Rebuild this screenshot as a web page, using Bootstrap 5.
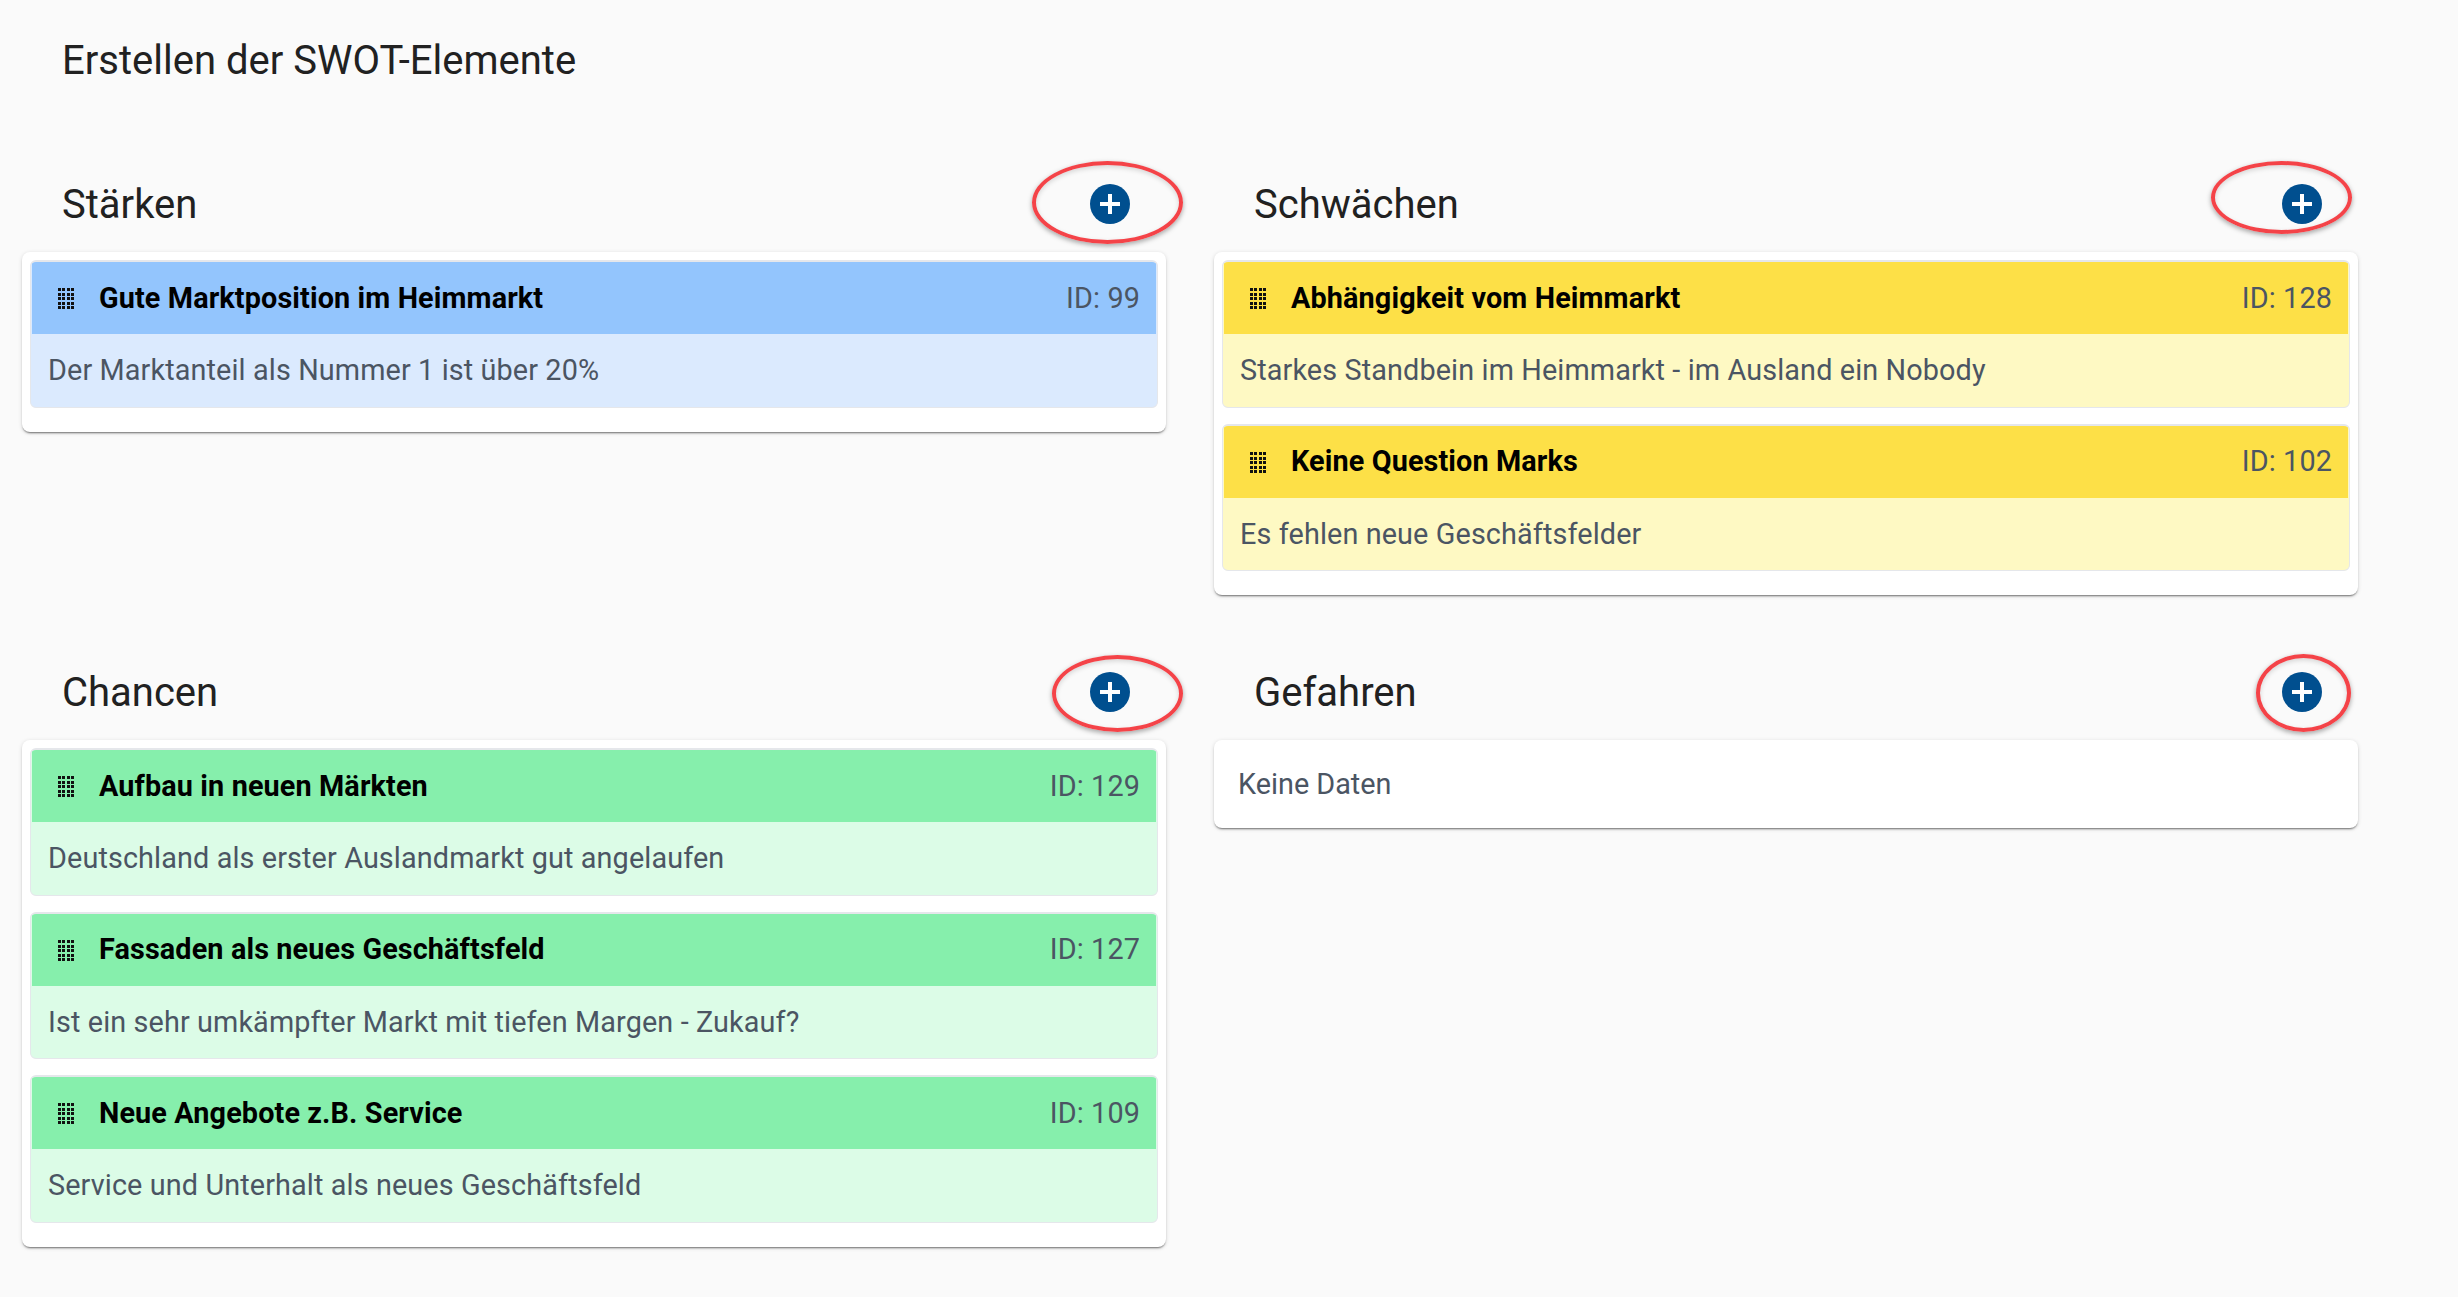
<!DOCTYPE html>
<html lang="de">
<head>
  <meta charset="UTF-8">
  <title>SWOT-Elemente</title>
  <link href="https://cdn.jsdelivr.net/npm/bootstrap@5.3.3/dist/css/bootstrap.min.css" rel="stylesheet">
  <style>
    body {
      background: #fafafa;
      font-family: Roboto, "Liberation Sans", sans-serif;
      color: #212121;
    }

    .swot-page {
      width: 2336px;
      margin-left: 22px;
      padding: 37px 0 40px;
    }

    .swot-title {
      font-size: 40px;
      font-weight: 400;
      line-height: 48px;
      margin: 0 0 35px 40px;
    }

    .swot-grid {
      display: grid;
      grid-template-columns: 1144px 1144px;
      column-gap: 48px;
      row-gap: 49px;
      align-items: start;
      padding-top: 36px;
    }

    .swot-head {
      height: 96px;
      padding: 0 36px 0 40px;
      position: relative;
    }

    .swot-head h2 {
      font-size: 40px;
      font-weight: 400;
      margin: 0;
      padding-top: 2px;
    }

    .add-btn {
      width: 40px;
      height: 40px;
      padding: 0;
      border: 0;
      border-radius: 50%;
      background: #004f8f;
    }

    .add-btn svg {
      display: block;
      margin: auto;
    }

    .red-ring {
      position: absolute;
      border: 4px solid #f44348;
      border-radius: 50%;
      box-shadow: 0 2px 5px rgba(0, 0, 0, .35), inset 0 2px 5px rgba(0, 0, 0, .15);
      pointer-events: none;
    }

    .ring-a { left: 1010px; top: 5px; width: 151px; height: 83px; }
    .ring-b { left: 997px; top: 5px; width: 141px; height: 73px; }
    .ring-c { left: 1030px; top: 11px; width: 131px; height: 77px; }
    .ring-d { left: 1042px; top: 10px; width: 95px; height: 78px; }

    .swot-panel {
      background: #fff;
      border: 0;
      border-radius: 8px;
      padding: 8px;
      box-shadow: 0 2px 2px -1px rgba(0, 0, 0, .5), 0 1px 4px rgba(0, 0, 0, .15);
    }

    .swot-panel.is-empty {
      padding: 24px;
      height: 88px;
      font-size: 28.8px;
      line-height: 41px;
      color: #4b5563;
    }

    .swot-item {
      border: 1px solid #e5e7eb;
      border-top-width: 2px;
      border-radius: 6px;
      overflow: hidden;
      margin-bottom: 16px;
      letter-spacing: .12px;
    }

    .swot-item .card-header {
      height: 72px;
      margin: 0 1px;
      padding: 1px 16px 0 26px;
      border: 0;
      border-radius: 0;
      font-size: 28.8px;
    }

    .item-name {
      font-weight: 700;
      color: #000;
      margin-left: 25px;
    }

    .item-id {
      color: #4b5563;
    }

    .swot-item .card-body {
      flex: none;
      height: 72.5px;
      padding: 0 17px;
      font-size: 28.8px;
      line-height: 73px;
      color: #4b5563;
    }

    .drag-dots {
      display: block;
      flex: none;
    }

    .tone-blue { background: #dbeafe; }
    .tone-blue .card-header { background: #93c5fd; }
    .tone-yellow { background: #fef9c3; }
    .tone-yellow .card-header { background: #fde047; }
    .tone-green { background: #dcfce7; }
    .tone-green .card-header { background: #86efac; }
  </style>
</head>
<body>

<svg width="0" height="0" class="d-block">
  <defs>
    <symbol id="dots" viewBox="0 0 16 21">
      <g fill="#111">
        <rect x="0" y="0" width="3" height="3"/><rect x="4" y="0" width="3" height="3"/><rect x="9" y="0" width="3" height="3"/><rect x="13" y="0" width="3" height="3"/>
        <rect x="0" y="5" width="3" height="3"/><rect x="4" y="5" width="3" height="3"/><rect x="9" y="5" width="3" height="3"/><rect x="13" y="5" width="3" height="3"/>
        <rect x="0" y="9" width="3" height="3"/><rect x="4" y="9" width="3" height="3"/><rect x="9" y="9" width="3" height="3"/><rect x="13" y="9" width="3" height="3"/>
        <rect x="0" y="14" width="3" height="3"/><rect x="4" y="14" width="3" height="3"/><rect x="9" y="14" width="3" height="3"/><rect x="13" y="14" width="3" height="3"/>
        <rect x="0" y="18" width="3" height="3"/><rect x="4" y="18" width="3" height="3"/><rect x="9" y="18" width="3" height="3"/><rect x="13" y="18" width="3" height="3"/>
      </g>
    </symbol>
    <symbol id="plus" viewBox="0 0 40 40">
      <path d="M18 10h4v8h8v4h-8v8h-4v-8h-8v-4h8z" fill="#fff"/>
    </symbol>
  </defs>
</svg>

<div class="swot-page">
  <h1 class="swot-title">Erstellen der SWOT-Elemente</h1>

  <div class="swot-grid">

    <!-- Staerken -->
    <section>
      <div class="swot-head d-flex justify-content-between align-items-center">
        <h2>Stärken</h2>
        <button type="button" class="add-btn"><svg width="40" height="40"><use href="#plus"/></svg></button>
        <span class="red-ring ring-a"></span>
      </div>
      <div class="card swot-panel">
        <div class="card swot-item tone-blue">
          <div class="card-header d-flex align-items-center">
            <svg class="drag-dots" width="16" height="21"><use href="#dots"/></svg>
            <span class="item-name">Gute Marktposition im Heimmarkt</span>
            <span class="item-id ms-auto">ID: 99</span>
          </div>
          <div class="card-body">Der Marktanteil als Nummer 1 ist über 20%</div>
        </div>
      </div>
    </section>

    <!-- Schwaechen -->
    <section>
      <div class="swot-head d-flex justify-content-between align-items-center">
        <h2>Schwächen</h2>
        <button type="button" class="add-btn"><svg width="40" height="40"><use href="#plus"/></svg></button>
        <span class="red-ring ring-b"></span>
      </div>
      <div class="card swot-panel">
        <div class="card swot-item tone-yellow">
          <div class="card-header d-flex align-items-center">
            <svg class="drag-dots" width="16" height="21"><use href="#dots"/></svg>
            <span class="item-name">Abhängigkeit vom Heimmarkt</span>
            <span class="item-id ms-auto">ID: 128</span>
          </div>
          <div class="card-body">Starkes Standbein im Heimmarkt - im Ausland ein Nobody</div>
        </div>
        <div class="card swot-item tone-yellow">
          <div class="card-header d-flex align-items-center">
            <svg class="drag-dots" width="16" height="21"><use href="#dots"/></svg>
            <span class="item-name">Keine Question Marks</span>
            <span class="item-id ms-auto">ID: 102</span>
          </div>
          <div class="card-body">Es fehlen neue Geschäftsfelder</div>
        </div>
      </div>
    </section>

    <!-- Chancen -->
    <section>
      <div class="swot-head d-flex justify-content-between align-items-center">
        <h2>Chancen</h2>
        <button type="button" class="add-btn"><svg width="40" height="40"><use href="#plus"/></svg></button>
        <span class="red-ring ring-c"></span>
      </div>
      <div class="card swot-panel">
        <div class="card swot-item tone-green">
          <div class="card-header d-flex align-items-center">
            <svg class="drag-dots" width="16" height="21"><use href="#dots"/></svg>
            <span class="item-name">Aufbau in neuen Märkten</span>
            <span class="item-id ms-auto">ID: 129</span>
          </div>
          <div class="card-body">Deutschland als erster Auslandmarkt gut angelaufen</div>
        </div>
        <div class="card swot-item tone-green">
          <div class="card-header d-flex align-items-center">
            <svg class="drag-dots" width="16" height="21"><use href="#dots"/></svg>
            <span class="item-name">Fassaden als neues Geschäftsfeld</span>
            <span class="item-id ms-auto">ID: 127</span>
          </div>
          <div class="card-body">Ist ein sehr umkämpfter Markt mit tiefen Margen - Zukauf?</div>
        </div>
        <div class="card swot-item tone-green">
          <div class="card-header d-flex align-items-center">
            <svg class="drag-dots" width="16" height="21"><use href="#dots"/></svg>
            <span class="item-name">Neue Angebote z.B. Service</span>
            <span class="item-id ms-auto">ID: 109</span>
          </div>
          <div class="card-body">Service und Unterhalt als neues Geschäftsfeld</div>
        </div>
      </div>
    </section>

    <!-- Gefahren -->
    <section>
      <div class="swot-head d-flex justify-content-between align-items-center">
        <h2>Gefahren</h2>
        <button type="button" class="add-btn"><svg width="40" height="40"><use href="#plus"/></svg></button>
        <span class="red-ring ring-d"></span>
      </div>
      <div class="card swot-panel is-empty">Keine Daten</div>
    </section>

  </div>
</div>

<script src="https://cdn.jsdelivr.net/npm/bootstrap@5.3.3/dist/js/bootstrap.bundle.min.js"></script>
</body>
</html>
